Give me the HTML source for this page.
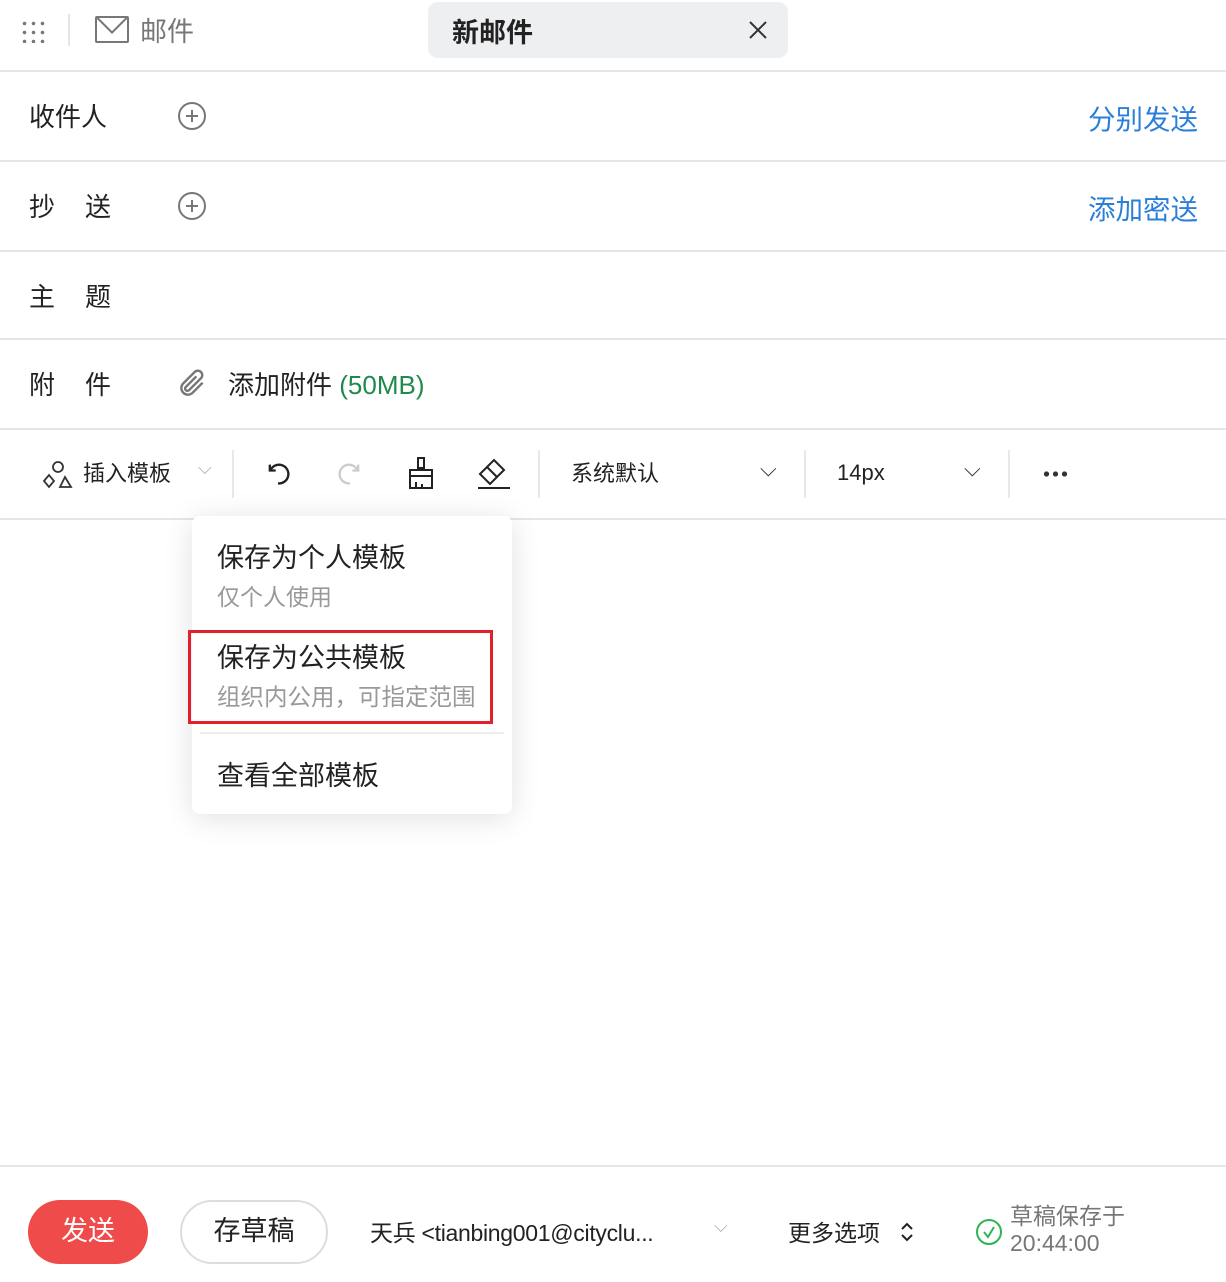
<!DOCTYPE html>
<html><head><meta charset="utf-8"><style>
*{margin:0;padding:0;box-sizing:border-box}
body{width:1226px;height:1282px;background:#fff;font-family:"Liberation Sans","Noto Sans CJK SC",sans-serif;color:#222;position:relative;overflow:hidden}
.a{position:absolute}
.line{position:absolute;left:0;width:1226px;height:2px;background:#e6e6e6}
.lbl{position:absolute;left:29px;font-size:26px;color:#222}
.lbl b{font-weight:normal;display:inline-block;width:56px}
.plus{position:absolute;left:178px;width:28px;height:28px;border:2px solid #777;border-radius:50%}
.plus:before{content:"";position:absolute;left:6px;top:11px;width:12px;height:2px;background:#777}
.plus:after{content:"";position:absolute;left:11px;top:6px;width:2px;height:12px;background:#777}
.blue{position:absolute;right:28px;font-size:27.5px;color:#2b7fd8}
.tb{position:absolute;top:456px;font-size:22px;color:#222}
.sep{position:absolute;top:450px;width:2px;height:48px;background:#e8e8e8}
</style></head><body>
<div class="a" style="left:20px;top:19px;width:26px;height:24px;background-image:radial-gradient(circle,#777 1.6px,transparent 2px);background-size:9px 9px"></div>
<div class="a" style="left:68px;top:14px;width:2px;height:32px;background:#e5e5e5"></div>
<div class="a" style="left:95px;top:16px;width:34px;height:27px;border:2px solid #777;border-radius:2px;overflow:hidden"><div style="position:absolute;left:3px;top:-13px;width:24px;height:24px;border:2px solid #777;transform:rotate(45deg)"></div></div>
<div class="a" style="left:140px;top:10px;font-size:27px;color:#777">邮件</div>
<div class="a" style="left:428px;top:2px;width:360px;height:56px;background:#eeeff1;border-radius:10px"></div>
<div class="a" style="left:452px;top:11px;font-size:27px;font-weight:bold;color:#222">新邮件</div>
<svg class="a" style="left:748px;top:20px" width="20" height="20" viewBox="0 0 20 20" stroke="#333" stroke-width="2"><path d="M2 2l16 16M18 2L2 18"/></svg>
<div class="line" style="top:70px"></div>
<div class="lbl" style="top:97px">收件人</div><div class="plus" style="top:102px"></div><div class="blue" style="top:97px">分别发送</div>
<div class="line" style="top:160px"></div>
<div class="lbl" style="top:187px"><b>抄</b>送</div><div class="plus" style="top:192px"></div><div class="blue" style="top:187px">添加密送</div>
<div class="line" style="top:250px"></div>
<div class="lbl" style="top:277px"><b>主</b>题</div>
<div class="line" style="top:338px"></div>
<div class="lbl" style="top:365px"><b>附</b>件</div>
<svg class="a" style="left:176px;top:368px" width="32" height="32" viewBox="0 0 24 24" fill="none" stroke="#777" stroke-width="1.8"><path d="M20 11l-8 8a5 5 0 01-7-7l9-9a3.3 3.3 0 014.7 4.7l-9 9a1.7 1.7 0 01-2.4-2.4l8-8"/></svg>
<div class="a" style="left:228px;top:365px;font-size:26px">添加附件 <span style="color:#1f8a4c">(50MB)</span></div>
<div class="line" style="top:428px"></div>
<svg class="a" style="left:42px;top:459px" width="32" height="30" viewBox="0 0 32 30" fill="none" stroke="#333" stroke-width="1.8"><circle cx="16" cy="8" r="5"/><path d="M2 22l5-6 5 6-5 6z"/><path d="M18 28l5-10 6 10z"/></svg>
<div class="tb" style="left:83px">插入模板</div>
<div class="a" style="left:198px;top:458px;font-size:18px;color:#aaa">⌵</div>
<div class="sep" style="left:232px"></div>
<svg class="a" style="left:264px;top:460px" width="28" height="28" viewBox="0 0 24 24" fill="none" stroke="#222" stroke-width="2"><path d="M5 4v5h5"/><path d="M5.5 9A8 8 0 1112 20"/></svg>
<svg class="a" style="left:336px;top:460px" width="28" height="28" viewBox="0 0 24 24" fill="none" stroke="#ccc" stroke-width="2"><path d="M19 4v5h-5"/><path d="M18.5 9A8 8 0 1012 20"/></svg>
<svg class="a" style="left:406px;top:456px" width="30" height="34" viewBox="0 0 30 34" fill="none" stroke="#222" stroke-width="2"><path d="M12 2h6v10h-6z"/><path d="M4 14h22v18H4z M4 20h22 M10 32v-6 M16 32v-4"/></svg>
<svg class="a" style="left:476px;top:456px" width="36" height="34" viewBox="0 0 36 34" fill="none" stroke="#222" stroke-width="2"><path d="M4 18L18 4l10 10-14 14z M11 11l10 10 M2 32h32"/></svg>
<div class="sep" style="left:538px"></div>
<div class="tb" style="left:571px">系统默认</div>
<div class="a" style="left:760px;top:456px;font-size:22px;color:#333">⌵</div>
<div class="sep" style="left:804px"></div>
<div class="tb" style="left:837px;top:460px">14px</div>
<div class="a" style="left:964px;top:456px;font-size:22px;color:#333">⌵</div>
<div class="sep" style="left:1008px"></div>
<div class="a" style="left:1042px;top:471px;width:26px;height:6px;background-image:radial-gradient(circle,#333 2.4px,transparent 2.8px);background-size:9px 6px"></div>
<div class="line" style="top:518px"></div>
<div class="a" style="left:192px;top:516px;width:320px;height:298px;background:#fff;border-radius:8px;box-shadow:0 4px 30px rgba(0,0,0,.12)"></div>
<div class="a" style="left:217px;top:536px;font-size:27px">保存为个人模板</div>
<div class="a" style="left:217px;top:578px;font-size:23px;color:#999">仅个人使用</div>
<div class="a" style="left:188px;top:630px;width:305px;height:94px;border:3px solid #e0202b"></div>
<div class="a" style="left:217px;top:636px;font-size:27px">保存为公共模板</div>
<div class="a" style="left:217px;top:678px;font-size:23.5px;color:#999">组织内公用，可指定范围</div>
<div class="a" style="left:200px;top:732px;width:304px;height:2px;background:#eee"></div>
<div class="a" style="left:217px;top:754px;font-size:27px">查看全部模板</div>
<div class="line" style="top:1165px"></div>
<div class="a" style="left:28px;top:1200px;width:120px;height:64px;background:#ef4b4b;border-radius:32px;color:#fff;font-size:27px;text-align:center;line-height:62px">发送</div>
<div class="a" style="left:180px;top:1200px;width:148px;height:64px;border:2px solid #ddd;border-radius:32px;font-size:27px;text-align:center;line-height:58px">存草稿</div>
<div class="a" style="left:370px;top:1214px;font-size:23px;letter-spacing:-0.3px">天兵 &lt;tianbing001@cityclu...</div>
<div class="a" style="left:714px;top:1216px;font-size:18px;color:#aaa">⌵</div>
<div class="a" style="left:788px;top:1214px;font-size:23px">更多选项</div>
<svg class="a" style="left:898px;top:1220px" width="18" height="24" viewBox="0 0 18 24" fill="none" stroke="#222" stroke-width="2"><path d="M4 9l5-5 5 5 M4 15l5 5 5-5"/></svg>
<div class="a" style="left:976px;top:1219px;width:26px;height:26px;border:2px solid #2fb454;border-radius:50%"></div>
<svg class="a" style="left:976px;top:1219px" width="26" height="26" viewBox="0 0 26 26" fill="none" stroke="#2fb454" stroke-width="2"><path d="M8 13l4 5 6-10"/></svg>
<div class="a" style="left:1010px;top:1203px;font-size:23px;color:#777;line-height:27px">草稿保存于<br>20:44:00</div>
</body></html>
